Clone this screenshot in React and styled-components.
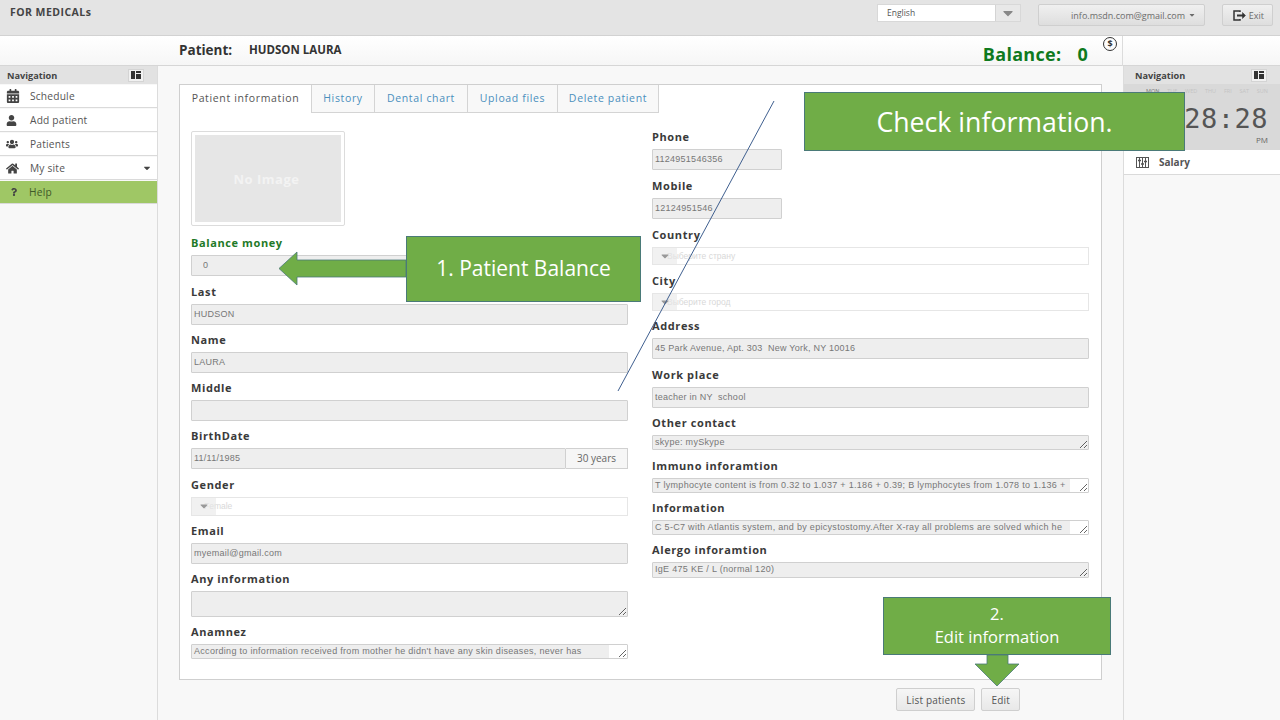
import React from 'react';
import styled, { createGlobalStyle } from 'styled-components';
import { FaCalendarAlt, FaUser, FaUsers, FaHome, FaQuestion, FaCaretDown } from 'react-icons/fa';

const GlobalStyle = createGlobalStyle`
  html, body {
    margin: 0;
    padding: 0;
    background: #f8f8f8;
    font-family: "Open Sans", "Liberation Sans", sans-serif;
  }
`;

const Page = styled.div`
  position: relative;
  width: 1280px;
  height: 720px;
  overflow: hidden;
  display: flex;
  flex-direction: column;
`;

const TopBar = styled.header`
  height: 36px;
  flex: none;
  box-sizing: border-box;
  display: flex;
  align-items: flex-start;
  padding: 4px 7px 0 10px;
  background: #e4e4e4;
  border-bottom: 1px solid #d2d2d2;
`;

const Brand = styled.div`
  flex: 1;
  font-size: 10.5px;
  line-height: 16px;
  letter-spacing: 0.45px;
  font-weight: 700;
  color: #444;
`;

const LangSelect = styled.div`
  width: 144px;
  height: 18px;
  margin-right: 17px;
  display: flex;
  background: #fff;
  border: 1px solid #d8d8d8;
  box-sizing: border-box;
  font-size: 8.5px;
  line-height: 16px;
  color: #555;
`;

const LangText = styled.span`
  flex: 1;
  padding-left: 9px;
`;

const LangCaret = styled.span`
  width: 24px;
  display: flex;
  align-items: center;
  justify-content: center;
  background: #e8e8e8;
  border-left: 1px solid #d4d4d4;
  color: #888;
  font-size: 16px;
`;

const TopButton = styled.button`
  width: ${p => p.$w}px;
  height: 22px;
  margin-left: ${p => p.$ml}px;
  padding: 0 8px;
  display: flex;
  align-items: center;
  justify-content: flex-end;
  gap: 3px;
  background: linear-gradient(#f0f0f0, #dedede);
  border: 1px solid #cfcfcf;
  border-radius: 2px;
  font-family: inherit;
  font-size: 9px;
  color: #6c6c6c;
`;

const SubBar = styled.div`
  position: relative;
  height: 30px;
  flex: none;
  box-sizing: border-box;
  display: flex;
  align-items: center;
  padding: 0 0 2px 179px;
  background: linear-gradient(#fff, #f6f6f6);
  border-bottom: 1px solid #d6d6d6;
`;

const PatientLabel = styled.strong`
  font-size: 13.5px;
  color: #333;
  width: 70px;
`;

const PatientName = styled.strong`
  font-size: 11.5px;
  color: #333;
`;

const BalanceTotal = styled.div`
  margin-left: auto;
  margin-right: 192px;
  margin-top: 8px;
  display: flex;
  gap: 16px;
  font-size: 18px;
  line-height: 20px;
  font-weight: 700;
  color: #0f7a1e;
  letter-spacing: 0.3px;
`;

const DollarBadge = styled.span`
  position: absolute;
  left: 1103px;
  top: 1px;
  width: 12px;
  height: 12px;
  border: 1px solid #333;
  border-radius: 50%;
  text-align: center;
  font-size: 9px;
  line-height: 12px;
  font-weight: 700;
  color: #333;
`;

const RightDivider = styled.span`
  position: absolute;
  left: 1122px;
  top: 0;
  bottom: -1px;
  width: 1px;
  background: #dcdcdc;
`;

const Body = styled.div`
  flex: 1;
  display: grid;
  grid-template-columns: 158px 965px 157px;
  min-height: 0;
`;

const Side = styled.aside`
  background: #f8f8f8;
  border-right: ${p => (p.$right ? '0' : '1px solid #dcdcdc')};
  border-left: ${p => (p.$right ? '1px solid #dcdcdc' : '0')};
`;

const SideHead = styled.div`
  height: 18px;
  margin-bottom: ${p => (p.$right ? 0 : 1)}px;
  display: flex;
  align-items: center;
  justify-content: space-between;
  padding: 0 13px 0 ${p => (p.$right ? '11px' : '7px')};
  background: #e2e2e2;
  font-size: 9.2px;
  font-weight: 700;
  color: #444;
`;

const SideToggle = styled.span`
  width: 16px;
  height: 13px;
  display: flex;
  align-items: center;
  justify-content: center;
  background: #f1f1f1;
  border: 1px solid #d4d4d4;
  box-sizing: border-box;
`;

const NavRow = styled.div`
  height: 23px;
  box-sizing: border-box;
  margin-bottom: 1px;
  display: flex;
  align-items: center;
  padding-left: ${p => (p.$help ? '10px' : '6px')};
  background: ${p => (p.$help ? '#9fc765' : '#fff')};
  border-bottom: 1px solid #dadada;
  font-size: 10.2px;
  color: ${p => (p.$help ? '#3f5a2a' : '#555')};
  letter-spacing: 0.2px;
`;

const NavIcon = styled.span`
  width: ${p => (p.$narrow ? 19 : 24)}px;
  flex: none;
  display: flex;
  color: #444;
  font-size: ${p => p.$size || 13}px;
`;

const NavCaret = styled.span`
  margin-left: auto;
  margin-right: 5px;
  display: flex;
  color: #444;
  font-size: 10px;
`;

const Main = styled.main`
  padding: 18px 21px 0 21px;
`;

const Card = styled.section`
  height: 596px;
  box-sizing: border-box;
  background: #fff;
  border: 1px solid #cfcfcf;
`;

const Tabs = styled.nav`
  height: 28px;
  display: flex;
  box-sizing: border-box;
`;

const Tab = styled.div`
  width: ${p => p.$w}px;
  box-sizing: border-box;
  text-align: center;
  font-size: 10.5px;
  line-height: 26px;
  letter-spacing: 0.65px;
  color: ${p => (p.$active ? '#555' : '#4a8fbd')};
  background: ${p => (p.$active ? '#fff' : '#f8f8f8')};
  border-right: 1px solid #d4d4d4;
  border-bottom: ${p => (p.$active ? '0' : '1px solid #d4d4d4')};
`;

const Columns = styled.div`
  display: grid;
  grid-template-columns: 437px 437px;
  column-gap: 24px;
  padding: 18px 11px 0;
`;

const Column = styled.div`
  display: flex;
  flex-direction: column;
`;

const Photo = styled.div`
  width: 154px;
  height: 95px;
  box-sizing: border-box;
  margin-bottom: 11px;
  padding: 3px;
  border: 1px solid #dcdcdc;
  border-radius: 2px;
`;

const PhotoFill = styled.div`
  height: 100%;
  display: flex;
  align-items: center;
  justify-content: center;
  background: #e6e6e6;
  padding-right: 3px;
  font-size: 13px;
  letter-spacing: 0.5px;
  font-weight: 700;
  color: #f3f3f3;
`;

const Field = styled.div`
  margin-bottom: ${p => p.$mb ?? 9.5}px;
`;

const Label = styled.label`
  display: block;
  height: 14px;
  margin-bottom: 4px;
  font-size: 11px;
  line-height: 12.5px;
  font-weight: 700;
  letter-spacing: 0.6px;
  color: ${p => (p.$green ? '#1f7a28' : '#3a3a3a')};
`;

const TextInput = styled.input`
  display: block;
  width: ${p => p.$w || '100%'};
  height: 21px;
  box-sizing: border-box;
  padding: 0 ${p => p.$pad || 2}px 2px;
  background: #eee;
  border: 1px solid #d0d0d0;
  border-radius: 1px;
  outline: none;
  font-family: "Liberation Sans", Arial, sans-serif;
  font-size: 9px;
  letter-spacing: 0.25px;
  color: #777;
`;

const TextArea = styled.textarea`
  display: block;
  width: 100%;
  height: ${p => p.$h}px;
  box-sizing: border-box;
  padding: 0 2px;
  overflow: hidden;
  resize: vertical;
  background: ${p => (p.$strip ? `linear-gradient(to right, #eee calc(100% - ${p.$strip}px), #fff 0)` : '#eee')};
  border: 1px solid #d0d0d0;
  border-radius: 1px;
  outline: none;
  font-family: "Liberation Sans", Arial, sans-serif;
  font-size: 9px;
  line-height: 12px;
  letter-spacing: 0.3px;
  color: #777;
  white-space: nowrap;
`;

const InputGroup = styled.div`
  display: flex;
`;

const Addon = styled.span`
  width: 62px;
  flex: none;
  height: 21px;
  box-sizing: border-box;
  border: 1px solid #d0d0d0;
  border-left: 0;
  background: #f6f6f6;
  text-align: center;
  font-size: 10px;
  line-height: 19px;
  color: #666;
`;

const SelectBox = styled.div`
  position: relative;
  height: 18.5px;
  box-sizing: border-box;
  padding-left: ${p => p.$pad}px;
  background: #fff;
  border: 1px solid #e6e6e6;
  font-family: "Liberation Sans", Arial, sans-serif;
  font-size: 8.5px;
  line-height: 17px;
  color: #d8d8d8;
`;

const SelectCaret = styled.span`
  position: absolute;
  left: 0;
  top: 0;
  bottom: 0;
  width: 24px;
  display: flex;
  align-items: center;
  justify-content: center;
  background: rgba(232, 232, 232, 0.6);
  color: #999;
  font-size: 12px;
`;

const Actions = styled.div`
  margin-top: 8px;
  padding-right: 82px;
  display: flex;
  justify-content: flex-end;
  gap: 6px;
`;

const ActionButton = styled.button`
  height: 23px;
  padding: 0 ${p => p.$pad}px;
  background: linear-gradient(#f6f6f6, #e8e8e8);
  border: 1px solid #cfcfcf;
  border-radius: 2px;
  font-family: inherit;
  font-size: 10px;
  letter-spacing: 0.2px;
  color: #555;
`;

const ClockPanel = styled.div`
  height: 66px;
  box-sizing: border-box;
  padding: 3px 12px 0 0;
  background: #d9d9d9;
  text-align: right;
  color: #444;
`;

const Days = styled.div`
  margin-left: 22px;
  display: flex;
  justify-content: space-between;
  font-size: 5.5px;
  line-height: 8px;
`;

const Day = styled.span`
  color: ${p => (p.$today ? '#777' : '#c4c4c4')};
`;

const ClockTime = styled.div`
  margin-top: 8px;
  font-family: "DejaVu Sans Mono", monospace;
  font-size: 27px;
  line-height: 32px;
  letter-spacing: 0.5px;
  color: #555;
`;

const ClockMeridiem = styled.div`
  margin-top: -1px;
  font-size: 8px;
  line-height: 12px;
  color: #666;
`;

const SalaryRow = styled.div`
  height: 25px;
  box-sizing: border-box;
  display: flex;
  align-items: center;
  gap: 10px;
  padding-left: 12px;
  background: #fff;
  border-bottom: 1px solid #dadada;
  font-size: 10px;
  font-weight: 700;
  color: #555;
`;

const Callout = styled.div`
  position: absolute;
  left: ${p => p.$x}px;
  top: ${p => p.$y}px;
  width: ${p => p.$w}px;
  height: ${p => p.$h}px;
  box-sizing: border-box;
  padding-top: ${p => p.$pt || 0}px;
  padding-bottom: ${p => p.$pb || 0}px;
  display: flex;
  flex-direction: column;
  align-items: center;
  justify-content: center;
  background: #70ad47;
  border: 1px solid #4a7a78;
  color: #fff;
  font-size: ${p => p.$fs}px;
  line-height: ${p => p.$lh || 1.3};
  text-align: center;
`;

const Overlay = styled.svg`
  position: absolute;
  left: 0;
  top: 0;
  pointer-events: none;
`;

const ToggleIcon = () => (
  <svg width="10" height="8" viewBox="0 0 10 8" fill="#333">
    <rect x="0" y="0" width="4" height="8" />
    <rect x="5" y="0" width="5" height="2" />
    <rect x="5" y="3" width="5" height="5" />
  </svg>
);

const ExitIcon = () => (
  <svg width="13" height="11" viewBox="0 0 13 11" fill="none" stroke="#333" strokeWidth="1.5">
    <path d="M7 2V1H1v9h6V9" />
    <path d="M4 5.5h6" strokeWidth="2" />
    <path d="M9.5 2.5l3 3-3 3z" fill="#333" strokeWidth="0.5" />
  </svg>
);

const SalaryIcon = () => (
  <svg width="13" height="11" viewBox="0 0 13 11" fill="none" stroke="#555" strokeWidth="1">
    <rect x="0.5" y="0.5" width="12" height="10" />
    <path d="M3.5 1v9M6.5 1v9M9.5 1v9" />
    <path d="M2 3.5h3M5 7h3M8 4.5h3" strokeWidth="1.5" />
  </svg>
);

const navItems = [
  { label: 'Schedule', icon: <FaCalendarAlt />, size: 14 },
  { label: 'Add patient', icon: <FaUser />, size: 11 },
  { label: 'Patients', icon: <FaUsers />, size: 12 },
  { label: 'My site', icon: <FaHome />, size: 13, caret: true },
];

const leftFields = [
  { label: 'Last', value: 'HUDSON' },
  { label: 'Name', value: 'LAURA' },
  { label: 'Middle', value: '' },
];

const rightAreas = [
  { label: 'Other contact', value: 'skype: mySkype', h: 15, mb: 10 },
  { label: 'Immuno inforamtion', value: 'T lymphocyte content is from 0.32 to 1.037 + 1.186 + 0.39; B lymphocytes from 1.078 to 1.136 +', h: 15, strip: 18, mb: 9 },
  { label: 'Information', value: 'C 5-C7 with Atlantis system, and by epicystostomy.After X-ray all problems are solved which he', h: 15, strip: 18, mb: 9 },
  { label: 'Alergo inforamtion', value: 'IgE 475 KE / L (normal 120)', h: 16 },
];

const tabs = [
  { label: 'Patient information', w: 132, active: true },
  { label: 'History', w: 63 },
  { label: 'Dental chart', w: 93 },
  { label: 'Upload files', w: 90 },
  { label: 'Delete patient', w: 101 },
];

const weekDays = ['MON', 'TUE', 'WED', 'THU', 'FRI', 'SAT', 'SUN'];

const InputField = ({ label, value, w, pad, mb }) => (
  <Field $mb={mb}>
    <Label>{label}</Label>
    <TextInput readOnly value={value} $w={w} $pad={pad} />
  </Field>
);

const AreaField = ({ label, value, h, strip, mb }) => (
  <Field $mb={mb}>
    <Label>{label}</Label>
    <TextArea readOnly value={value} $h={h} $strip={strip} />
  </Field>
);

const SelectField = ({ label, text, pad, mb }) => (
  <Field $mb={mb}>
    <Label>{label}</Label>
    <SelectBox $pad={pad}>
      {text}
      <SelectCaret><FaCaretDown /></SelectCaret>
    </SelectBox>
  </Field>
);

const App = () => (
  <Page>
    <GlobalStyle />
    <TopBar>
      <Brand>FOR MEDICALs</Brand>
      <LangSelect>
        <LangText>English</LangText>
        <LangCaret><FaCaretDown /></LangCaret>
      </LangSelect>
      <TopButton $w={167} $ml={0}>info.msdn.com@gmail.com <FaCaretDown size={8} /></TopButton>
      <TopButton $w={51} $ml={17}><ExitIcon /> Exit</TopButton>
    </TopBar>
    <SubBar>
      <PatientLabel>Patient:</PatientLabel>
      <PatientName>HUDSON LAURA</PatientName>
      <BalanceTotal><span>Balance:</span><span>0</span></BalanceTotal>
      <DollarBadge>$</DollarBadge>
      <RightDivider />
    </SubBar>
    <Body>
      <Side>
        <SideHead>Navigation <SideToggle><ToggleIcon /></SideToggle></SideHead>
        {navItems.map(item => (
          <NavRow key={item.label}>
            <NavIcon $size={item.size}>{item.icon}</NavIcon>
            {item.label}
            {item.caret && <NavCaret><FaCaretDown /></NavCaret>}
          </NavRow>
        ))}
        <NavRow $help>
          <NavIcon $size={8} $narrow><FaQuestion /></NavIcon>
          Help
        </NavRow>
      </Side>
      <Main>
        <Card>
          <Tabs>
            {tabs.map(tab => (
              <Tab key={tab.label} $w={tab.w} $active={tab.active}>{tab.label}</Tab>
            ))}
          </Tabs>
          <Columns>
            <Column>
              <Photo><PhotoFill>No Image</PhotoFill></Photo>
              <Field $mb={10}>
                <Label $green>Balance money</Label>
                <TextInput readOnly value="0" $pad={11} />
              </Field>
              {leftFields.map(f => <InputField key={f.label} {...f} mb={9} />)}
              <Field $mb={10}>
                <Label>BirthDate</Label>
                <InputGroup>
                  <TextInput readOnly value="11/11/1985" />
                  <Addon>30 years</Addon>
                </InputGroup>
              </Field>
              <SelectField label="Gender" text="Female" pad={12} mb={9.5} />
              <InputField label="Email" value="myemail@gmail.com" mb={9} />
              <AreaField label="Any information" value="" h={26} mb={9} />
              <AreaField
                label="Anamnez"
                value="According to information received from mother he didn't have any skin diseases, never has"
                h={15}
                strip={18}
              />
            </Column>
            <Column>
              <InputField label="Phone" value="1124951546356" w="130px" mb={10} />
              <InputField label="Mobile" value="12124951546" w="130px" mb={9.5} />
              <SelectField label="Country" text="Выберите страну" pad={14} mb={9.5} />
              <SelectField label="City" text="Выберите город" pad={14} mb={9} />
              <InputField label="Address" value="45 Park Avenue, Apt. 303  New York, NY 10016" mb={10} />
              <InputField label="Work place" value="teacher in NY  school" mb={9} />
              {rightAreas.map(f => <AreaField key={f.label} {...f} />)}
            </Column>
          </Columns>
        </Card>
        <Actions>
          <ActionButton $pad={9}>List patients</ActionButton>
          <ActionButton $pad={9}>Edit</ActionButton>
        </Actions>
      </Main>
      <Side $right>
        <SideHead $right>Navigation <SideToggle><ToggleIcon /></SideToggle></SideHead>
        <ClockPanel>
          <Days>
            {weekDays.map(d => <Day key={d} $today={d === 'MON'}>{d}</Day>)}
          </Days>
          <ClockTime>28:28</ClockTime>
          <ClockMeridiem>PM</ClockMeridiem>
        </ClockPanel>
        <SalaryRow><SalaryIcon /> Salary</SalaryRow>
      </Side>
    </Body>

    <Overlay width="1280" height="720" viewBox="0 0 1280 720">
      <path d="M774 101L618 391" stroke="#3f5f8f" strokeWidth="1" fill="none" />
      <path d="M406 260H297V252L279 268.5L297 285V277H406Z" fill="#70ad47" stroke="#4a7a78" strokeWidth="0.8" />
      <path d="M987 655V664H975L997 686L1019 664H1008V655Z" fill="#70ad47" stroke="#4a7a78" strokeWidth="0.8" />
    </Overlay>
    <Callout $x={804} $y={92} $w={381} $h={59} $fs={26.7} $pt={2}>Check information.</Callout>
    <Callout $x={406} $y={236} $w={235} $h={66} $fs={21} $pb={1}>1. Patient Balance</Callout>
    <Callout $x={883} $y={597} $w={228} $h={58} $fs={16.5} $lh={1.35} $pb={1}>
      <span>2.</span>
      <span>Edit information</span>
    </Callout>
  </Page>
);

export default App;
